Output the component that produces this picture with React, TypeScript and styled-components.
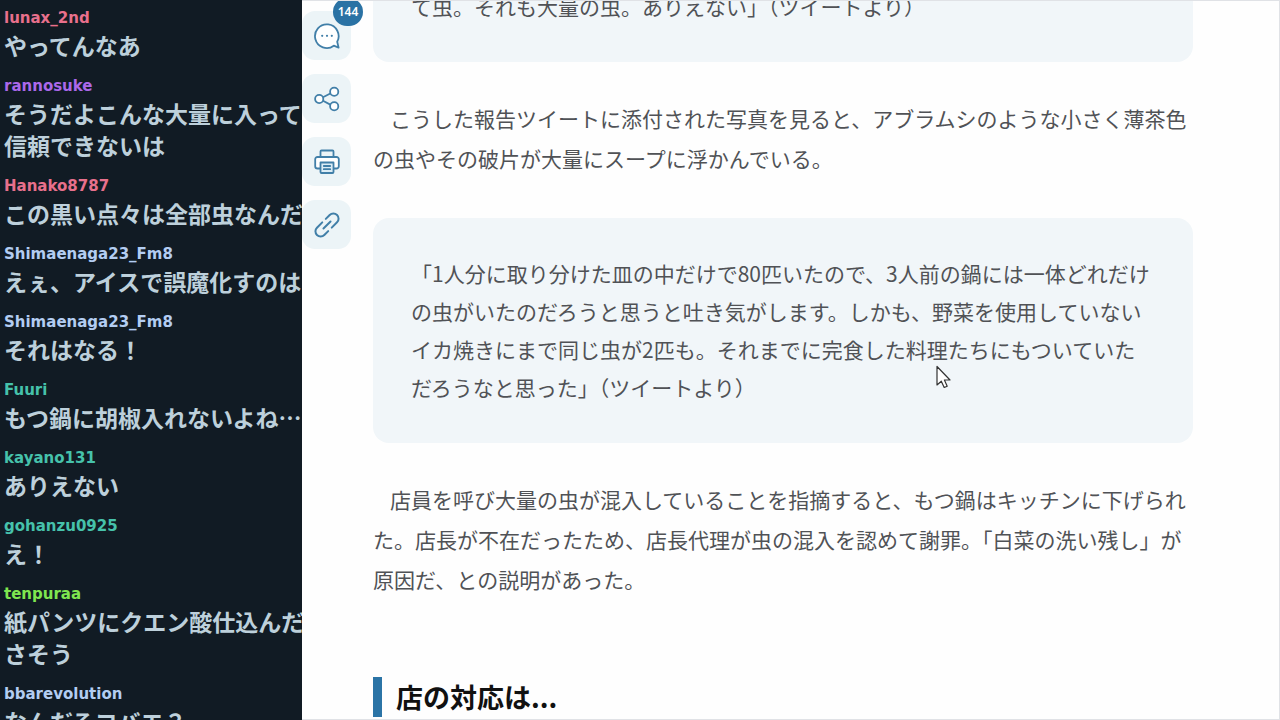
import React from 'react';
import styled, { createGlobalStyle } from 'styled-components';

const GlobalStyle = createGlobalStyle`
  * { box-sizing: border-box; }
  body {
    margin: 0;
    background: #fefefe;
    font-family: "Noto Sans CJK JP", sans-serif;
  }
`;

const Page = styled.div`
  display: grid;
  grid-template-columns: 302px minmax(0, 1fr);
  height: 100vh;
  overflow: hidden;
`;

const Chat = styled.aside`
  background: #111b24;
  overflow: hidden;
`;

const ChatList = styled.ul`
  list-style: none;
  margin: 0;
  padding: 8px 0 0 4px;
  display: flex;
  flex-direction: column;
  gap: 15px;
`;

const ChatItem = styled.li`
  white-space: nowrap;
`;

const UserName = styled.div<{ $color: string }>`
  color: ${(p) => p.$color};
  font: bold 15px/20px "DejaVu Sans", sans-serif;
`;

const Message = styled.p`
  margin: 1px 0 0;
  color: #bdd0db;
  font-size: 23px;
  line-height: 32px;
  font-weight: 700;
  white-space: pre;
`;

const Main = styled.main`
  display: grid;
  grid-template-columns: 49px minmax(0, 1fr);
  column-gap: 22px;
  padding-right: 86px;
  border: solid #e0e2e6;
  border-width: 1px 1px 1px 0;
  overflow: hidden;
`;

const Tools = styled.nav`
  display: flex;
  flex-direction: column;
  gap: 14px;
  padding-top: 10px;
`;

const ToolButton = styled.button`
  position: relative;
  display: grid;
  place-items: center;
  width: 49px;
  height: 49px;
  padding: 0;
  border: 0;
  border-radius: 13px;
  background: #ecf4f7;
  color: #417fa8;
  cursor: pointer;
`;

const Badge = styled.span`
  position: absolute;
  top: -13px;
  right: -12px;
  width: 30px;
  height: 28px;
  border-radius: 14px;
  background: #2a72a4;
  color: #fff;
  font: 600 12px/28px "Noto Sans", sans-serif;
  text-align: center;
`;

const Article = styled.article`
  color: #505256;
  font-size: 21px;
  line-height: 40px;
`;

const Quote = styled.blockquote<{ $continued?: boolean }>`
  margin: ${(p) => (p.$continued ? '-14px' : '0')} 0 0;
  padding: ${(p) => (p.$continued ? '0' : '36px')} 38px 37px;
  border-radius: 16px;
  background: #f1f6f9;
  line-height: 38px;
`;

const Paragraph = styled.p`
  margin: 36px 0 40px;
  text-indent: 17px;
`;

const Heading = styled.h2`
  margin: 78px 0 0;
  padding-left: 14px;
  border-left: 9px solid #2b74a6;
  color: #111;
  font-size: 27px;
  line-height: 40px;
  font-weight: 700;
`;

const Pointer = styled.svg`
  position: absolute;
  left: 935px;
  top: 365px;
`;

type Entry = { user: string; color: string; text: string };

const PINK = '#e8708c';
const BLUE = '#b3cdf2';
const TEAL = '#46c2ab';

const entries: Entry[] = [
  { user: 'lunax_2nd', color: PINK, text: 'やってんなあ' },
  { user: 'rannosuke', color: '#ab68ea', text: 'そうだよこんな大量に入って\n信頼できないは' },
  { user: 'Hanako8787', color: PINK, text: 'この黒い点々は全部虫なんだ' },
  { user: 'Shimaenaga23_Fm8', color: BLUE, text: 'えぇ、アイスで誤魔化すのは' },
  { user: 'Shimaenaga23_Fm8', color: BLUE, text: 'それはなる！' },
  { user: 'Fuuri', color: TEAL, text: 'もつ鍋に胡椒入れないよね…' },
  { user: 'kayano131', color: TEAL, text: 'ありえない' },
  { user: 'gohanzu0925', color: TEAL, text: 'え！' },
  { user: 'tenpuraa', color: '#7fe650', text: '紙パンツにクエン酸仕込んだ\nさそう' },
  { user: 'bbarevolution', color: BLUE, text: 'なんだろコバエ？' },
];

const Icon = ({ children }: { children: React.ReactNode }) => (
  <svg width="28" height="28" viewBox="0 0 28 28" fill="none" stroke="currentColor"
    strokeWidth="1.8" strokeLinecap="round" strokeLinejoin="round" aria-hidden="true">
    {children}
  </svg>
);

const CommentIcon = () => (
  <Icon>
    <path fill="#fff" d="M25.6 25.6 L20.8 23.7 A11.8 11.8 0 1 1 24.2 19.8 Z" />
    <g fill="currentColor" stroke="none">
      <circle cx="9.2" cy="13.8" r="1.1" />
      <circle cx="14" cy="13.8" r="1.1" />
      <circle cx="18.8" cy="13.8" r="1.1" />
    </g>
  </Icon>
);

const ShareIcon = () => (
  <Icon>
    <path d="M10 12.3 17.3 8.5 M10 15.8 17.3 19.6" />
    <g fill="#fff">
      <circle cx="6.2" cy="14" r="4.1" />
      <circle cx="21.2" cy="6.8" r="4.1" />
      <circle cx="21.2" cy="21.2" r="4.1" />
    </g>
  </Icon>
);

const PrintIcon = () => (
  <Icon>
    <path d="M7.5 9 V3.5 a1 1 0 0 1 1-1 h11 a1 1 0 0 1 1 1 V9" />
    <path fill="#fff" d="M7.5 20.5 H4.5 a2.3 2.3 0 0 1-2.3-2.3 V11.3 A2.3 2.3 0 0 1 4.5 9 h19 a2.3 2.3 0 0 1 2.3 2.3 v6.9 a2.3 2.3 0 0 1-2.3 2.3 h-3" />
    <path fill="#dcedf6" d="M7.5 14.5 h13 v9.5 a1 1 0 0 1-1 1 h-11 a1 1 0 0 1-1-1z" />
    <path d="M10.8 18 h6.4 M10.8 21.2 h6.4" />
  </Icon>
);

const LinkIcon = () => (
  <Icon>
    <g transform="rotate(-45 14 14)" strokeWidth="2">
      <path d="M12.5 8.8 H5 a5.2 5.2 0 0 0 0 10.4 h5.5" />
      <path d="M15.5 19.2 H23 a5.2 5.2 0 0 0 0-10.4 h-5.5" />
      <path d="M9 14 h10" />
    </g>
  </Icon>
);

export default function App() {
  return (
    <>
      <GlobalStyle />
      <Page>
        <Chat aria-label="チャット">
          <ChatList>
            {entries.map((e, i) => (
              <ChatItem key={i}>
                <UserName $color={e.color}>{e.user}</UserName>
                <Message>{e.text}</Message>
              </ChatItem>
            ))}
          </ChatList>
        </Chat>
        <Main>
          <Tools>
            <ToolButton aria-label="コメント"><CommentIcon /><Badge>144</Badge></ToolButton>
            <ToolButton aria-label="共有"><ShareIcon /></ToolButton>
            <ToolButton aria-label="印刷"><PrintIcon /></ToolButton>
            <ToolButton aria-label="リンク"><LinkIcon /></ToolButton>
          </Tools>
          <Article>
            <Quote $continued>て虫。それも大量の虫。ありえない」（ツイートより）</Quote>
            <Paragraph>
              こうした報告ツイートに添付された写真を見ると、アブラムシのような小さく薄茶色の虫やその破片が大量にスープに浮かんでいる。
            </Paragraph>
            <Quote>
              「1人分に取り分けた皿の中だけで80匹いたので、3人前の鍋には一体どれだけの虫がいたのだろうと思うと吐き気がします。しかも、野菜を使用していないイカ焼きにまで同じ虫が2匹も。それまでに完食した料理たちにもついていただろうなと思った」（ツイートより）
            </Quote>
            <Paragraph>
              店員を呼び大量の虫が混入していることを指摘すると、もつ鍋はキッチンに下げられた。店長が不在だったため、店長代理が虫の混入を認めて謝罪。「白菜の洗い残し」が原因だ、との説明があった。
            </Paragraph>
            <Heading>店の対応は...</Heading>
          </Article>
        </Main>
      </Page>
      <Pointer width="16" height="24" viewBox="0 0 16 24" aria-hidden="true">
        <path d="M2 1.5 V20 L6.3 16.2 L9.2 22.5 L12.2 21.2 L9.4 15 H15 Z" fill="#fff" stroke="#333" strokeWidth="1.2" strokeLinejoin="round" />
      </Pointer>
    </>
  );
}
